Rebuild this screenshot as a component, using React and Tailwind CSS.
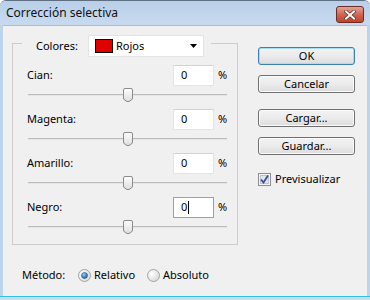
import React from 'react';

function Thumb() {
  return (
    <svg width="10" height="14" viewBox="0 0 10 14" className="absolute left-[95px] top-[-7px]">
      <defs>
        <linearGradient id="tg" x1="0" y1="0" x2="0" y2="1">
          <stop offset="0" stopColor="#ffffff" />
          <stop offset="1" stopColor="#dcdcdc" />
        </linearGradient>
      </defs>
      <path d="M2 0.5 H8 Q9.5 0.5 9.5 2 V10 Q9.5 11 8.5 12 L6 13.5 H4 L1.5 12 Q0.5 11 0.5 10 V2 Q0.5 0.5 2 0.5 Z" fill="url(#tg)" stroke="#8b8b8b" />
    </svg>
  );
}

function SliderRow({ label, focused }) {
  return (
    <div className="mb-[5px]">
      <div className="flex items-center h-[21px]">
        <span className="w-[160px] pl-[14px]">{label}</span>
        <div
          className={`w-[41px] h-[21px] bg-white border flex items-center pl-[7px] ${
            focused ? 'border-[#7aa7d8]' : 'border-[#e2e4e8] border-t-[#d0d3d8]'
          }`}
        >
          <span>0</span>
          {focused && <span className="w-[1px] h-[13px] bg-black ml-[1px]" />}
        </div>
        <span className="ml-[4px]">%</span>
      </div>
      <div className="h-[18px] flex items-center">
        <div className="relative ml-[15px] w-[199px] h-[2px] bg-[#e4e4e4] border-t border-[#bdbdbd]">
          <Thumb />
        </div>
      </div>
    </div>
  );
}

function Button({ children, primary }) {
  return (
    <div
      className={`w-[97px] h-[18px] rounded-[3px] border flex items-center justify-center bg-gradient-to-b from-[#f3f3f3] via-[#ebebeb] to-[#dcdcdc] ${
        primary ? 'border-[#3c7fb1] shadow-[inset_0_0_0_1px_#a9dcf7]' : 'border-[#707070] shadow-[inset_0_0_0_1px_#fbfbfb]'
      }`}
    >
      {children}
    </div>
  );
}

function Radio({ checked }) {
  return (
    <svg width="13" height="13" viewBox="0 0 13 13">
      <defs>
        <radialGradient id="rg" cx="0.35" cy="0.35" r="0.8">
          <stop offset="0" stopColor="#ffffff" />
          <stop offset="1" stopColor="#d4d4d4" />
        </radialGradient>
        <radialGradient id="rd" cx="0.35" cy="0.3" r="0.8">
          <stop offset="0" stopColor="#8fd0f5" />
          <stop offset="1" stopColor="#14589e" />
        </radialGradient>
      </defs>
      <circle cx="6.5" cy="6.5" r="6" fill="url(#rg)" stroke="#a3a3a3" />
      {checked && <circle cx="6.5" cy="6.5" r="3" fill="url(#rd)" stroke="#1c4f8a" strokeWidth="0.6" />}
    </svg>
  );
}

export default function App() {
  return (
    <div className="w-[370px] h-[300px] flex flex-col bg-[#bed3ec] font-['Noto_Sans',sans-serif] text-[11px] text-black overflow-hidden rounded-t-[6px] border-t border-[#5f6f82]">
      {/* title bar */}
      <div className="h-[24px] flex items-center justify-between pl-[6px] pr-[6px] bg-gradient-to-b from-[#b9cfe9] to-[#c8daee]">
        <span className="text-[12px] text-[#111]">Corrección selectiva</span>
        <div className="w-[28px] h-[17px] mt-[3px] rounded-[3px] border border-[#6e2b25] bg-gradient-to-b from-[#e3a496] via-[#cf6752] to-[#c0412a] flex items-center justify-center">
          <svg width="12" height="10" viewBox="0 0 12 10">
            <path d="M2 1.5 L10 8.5 M10 1.5 L2 8.5" stroke="#5a2a24" strokeWidth="3.4" strokeLinecap="square" />
            <path d="M2 1.5 L10 8.5 M10 1.5 L2 8.5" stroke="#ffffff" strokeWidth="2" strokeLinecap="square" />
          </svg>
        </div>
      </div>

      {/* body */}
      <div className="flex-1 mx-[3px] bg-[#f0f0f0] flex border-t border-[#a9bdd5]">
        <div className="w-[255px]">
          <div className="ml-[9px] mt-[17px] w-[226px] border border-[#cdcdcd] pb-[3px]">
            <div className="-mt-[9px] ml-[9px] w-[189px] h-[22px] bg-[#f0f0f0] flex items-center">
              <span className="w-[66px] pl-[14px] whitespace-nowrap">Colores:</span>
              <div className="w-[116px] h-[22px] bg-white border border-[#e3e3e3] flex items-center pl-[6px]">
                <span className="w-[18px] h-[14px] bg-[#e00000] border border-black" />
                <span className="ml-[3px] flex-1">Rojos</span>
                <svg width="7" height="4" viewBox="0 0 7 4" className="mr-[6px]">
                  <path d="M0 0 H7 L3.5 4 Z" fill="#000" />
                </svg>
              </div>
            </div>
            <div className="mt-[8px]">
              <SliderRow label="Cian:" />
              <SliderRow label="Magenta:" />
              <SliderRow label="Amarillo:" />
              <SliderRow label="Negro:" focused />
            </div>
          </div>

          <div className="mt-[22px] h-[16px] flex items-center pl-[19px]">
            <span className="w-[56px]">Método:</span>
            <Radio checked />
            <span className="ml-[3px] w-[53px]">Relativo</span>
            <Radio />
            <span className="ml-[3px]">Absoluto</span>
          </div>
        </div>

        <div className="pt-[21px] flex flex-col">
          <Button primary>OK</Button>
          <div className="mt-[10px]">
            <Button>Cancelar</Button>
          </div>
          <div className="mt-[16px]">
            <Button>Cargar...</Button>
          </div>
          <div className="mt-[10px]">
            <Button>Guardar...</Button>
          </div>
          <div className="mt-[16px] flex items-center">
            <svg width="13" height="13" viewBox="0 0 13 13">
              <rect x="0.5" y="0.5" width="12" height="12" fill="#f4f4f4" stroke="#8e8f8f" />
              <rect x="2.5" y="2.5" width="8" height="8" fill="#dfe6f2" stroke="#b9c3d3" />
              <path d="M3 6.5 L5.5 9.5 L10 2.5" stroke="#3c4f8c" strokeWidth="1.8" fill="none" />
            </svg>
            <span className="ml-[4px]">Previsualizar</span>
          </div>
        </div>
      </div>

      {/* bottom edge */}
      <div className="h-[4px] border-t border-[#33bde8] bg-[#c9dcef]" />
    </div>
  );
}
